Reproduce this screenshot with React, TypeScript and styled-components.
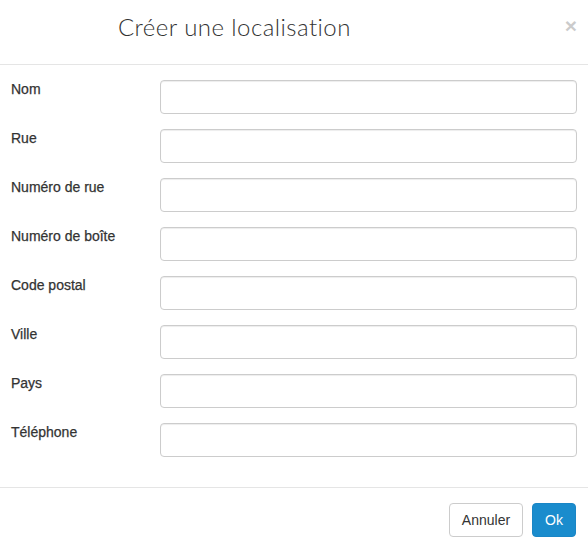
import React from "react";
import styled, { createGlobalStyle } from "styled-components";

const Global = createGlobalStyle`
  html, body { margin: 0; padding: 0; background: #fff; }
  body { font-family: "Liberation Sans", Arial, sans-serif; color: #333; }
  * { box-sizing: border-box; }
`;

const Modal = styled.div`
  width: 588px;
  background: #fff;
`;

const Header = styled.div`
  height: 65px;
  border-bottom: 1px solid #e5e5e5;
  display: flex;
  align-items: flex-start;
  justify-content: space-between;
  padding: 12px 11px 0 118px;
`;

const Title = styled.h4`
  margin: 0;
  font-family: "Lato", sans-serif;
  font-weight: 300;
  font-size: 24px;
  line-height: 30px;
  color: #333;
  letter-spacing: 0.45px;
`;

const Close = styled.button`
  border: 0;
  background: none;
  padding: 0;
  margin-top: 3px;
  font-family: "Liberation Sans", Arial, sans-serif;
  font-size: 21px;
  font-weight: 700;
  line-height: 1;
  color: #000;
  opacity: 0.2;
  cursor: pointer;
`;

const Body = styled.form`
  padding: 15px 11px 30px 10px;
  display: flex;
  flex-direction: column;
  gap: 15px;
  border-bottom: 1px solid #e5e5e5;
`;

const Row = styled.div`
  display: grid;
  grid-template-columns: 150px 1fr;
  align-items: start;
`;

const Label = styled.label`
  font-size: 14px;
  line-height: 20px;
  margin-top: -1px;
  padding-left: 1px;
  color: #333;
  -webkit-text-stroke: 0.25px #333;
`;

const Input = styled.input`
  height: 34px;
  width: 100%;
  border: 1px solid #ccc;
  border-radius: 4px;
  box-shadow: inset 0 1px 1px rgba(0, 0, 0, 0.075);
  padding: 6px 12px;
  font-size: 14px;
  font-family: inherit;
`;

const Footer = styled.div`
  padding: 15px 12px 15px 15px;
  display: flex;
  justify-content: flex-end;
  gap: 9px;
`;

const Button = styled.button<{ $primary?: boolean }>`
  height: 34px;
  padding: 6px 12px;
  font-family: "Liberation Sans", Arial, sans-serif;
  font-size: 14px;
  line-height: 20px;
  border-radius: 4px;
  border: 1px solid ${(p) => (p.$primary ? "#1a86c6" : "#ccc")};
  background: ${(p) => (p.$primary ? "#1a8ccd" : "#fff")};
  color: ${(p) => (p.$primary ? "#fff" : "#333")};
  cursor: pointer;
`;

const fields = [
  "Nom",
  "Rue",
  "Numéro de rue",
  "Numéro de boîte",
  "Code postal",
  "Ville",
  "Pays",
  "Téléphone",
];

export default function App() {
  return (
    <Modal>
      <Global />
      <Header>
        <Title>Créer une localisation</Title>
        <Close type="button" aria-label="Fermer">×</Close>
      </Header>
      <Body onSubmit={(e) => e.preventDefault()}>
        {fields.map((f) => (
          <Row key={f}>
            <Label>{f}</Label>
            <Input type="text" />
          </Row>
        ))}
      </Body>
      <Footer>
        <Button type="button">Annuler</Button>
        <Button type="button" $primary>
          Ok
        </Button>
      </Footer>
    </Modal>
  );
}
